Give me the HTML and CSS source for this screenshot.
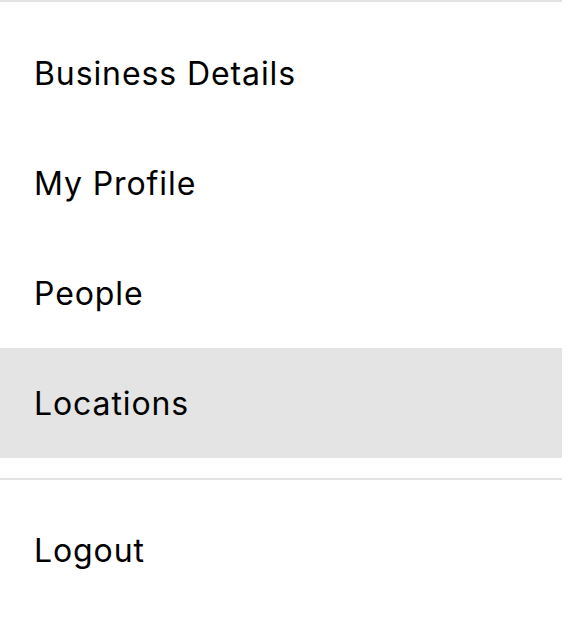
FILE: index.html
```html
<!DOCTYPE html>
<html lang="en">
<head>
  <meta charset="UTF-8" />
  <meta name="viewport" content="width=device-width, initial-scale=1.0"/>
  <title>Menu</title>
  <link rel="stylesheet" href="styles.css">
</head>
<body>

  <!-- Settings menu -->
  <nav class="menu">
    <ul class="menu-group">
      <li><a href="#" class="menu-item">Business Details</a></li>
      <li><a href="#" class="menu-item">My Profile</a></li>
      <li><a href="#" class="menu-item">People</a></li>
      <li><a href="#" class="menu-item active">Locations</a></li>
    </ul>

    <ul class="menu-group menu-group-last">
      <li><a href="#" class="menu-item">Logout</a></li>
    </ul>
  </nav>

</body>
</html>
```

FILE: styles.css
```css
* {
  box-sizing: border-box;
  margin: 0;
  padding: 0;
}

body {
  font-family: Inter, Roboto, "Noto Sans", sans-serif;
  background: #fff;
  color: #000;
}

.menu {
  width: 562px;
}

.menu-group {
  list-style: none;
  border-top: 2px solid #e3e3e3;
  padding: 16px 0 20px;
}

.menu-group-last {
  padding-top: 15px;
}

.menu-item {
  display: flex;
  align-items: center;
  height: 110px;
  padding-left: 34px;
  font-size: 32px;
  letter-spacing: 0.9px;
  color: #000;
  text-decoration: none;
}

.menu-item.active {
  background-color: #e4e4e4;
}
```
